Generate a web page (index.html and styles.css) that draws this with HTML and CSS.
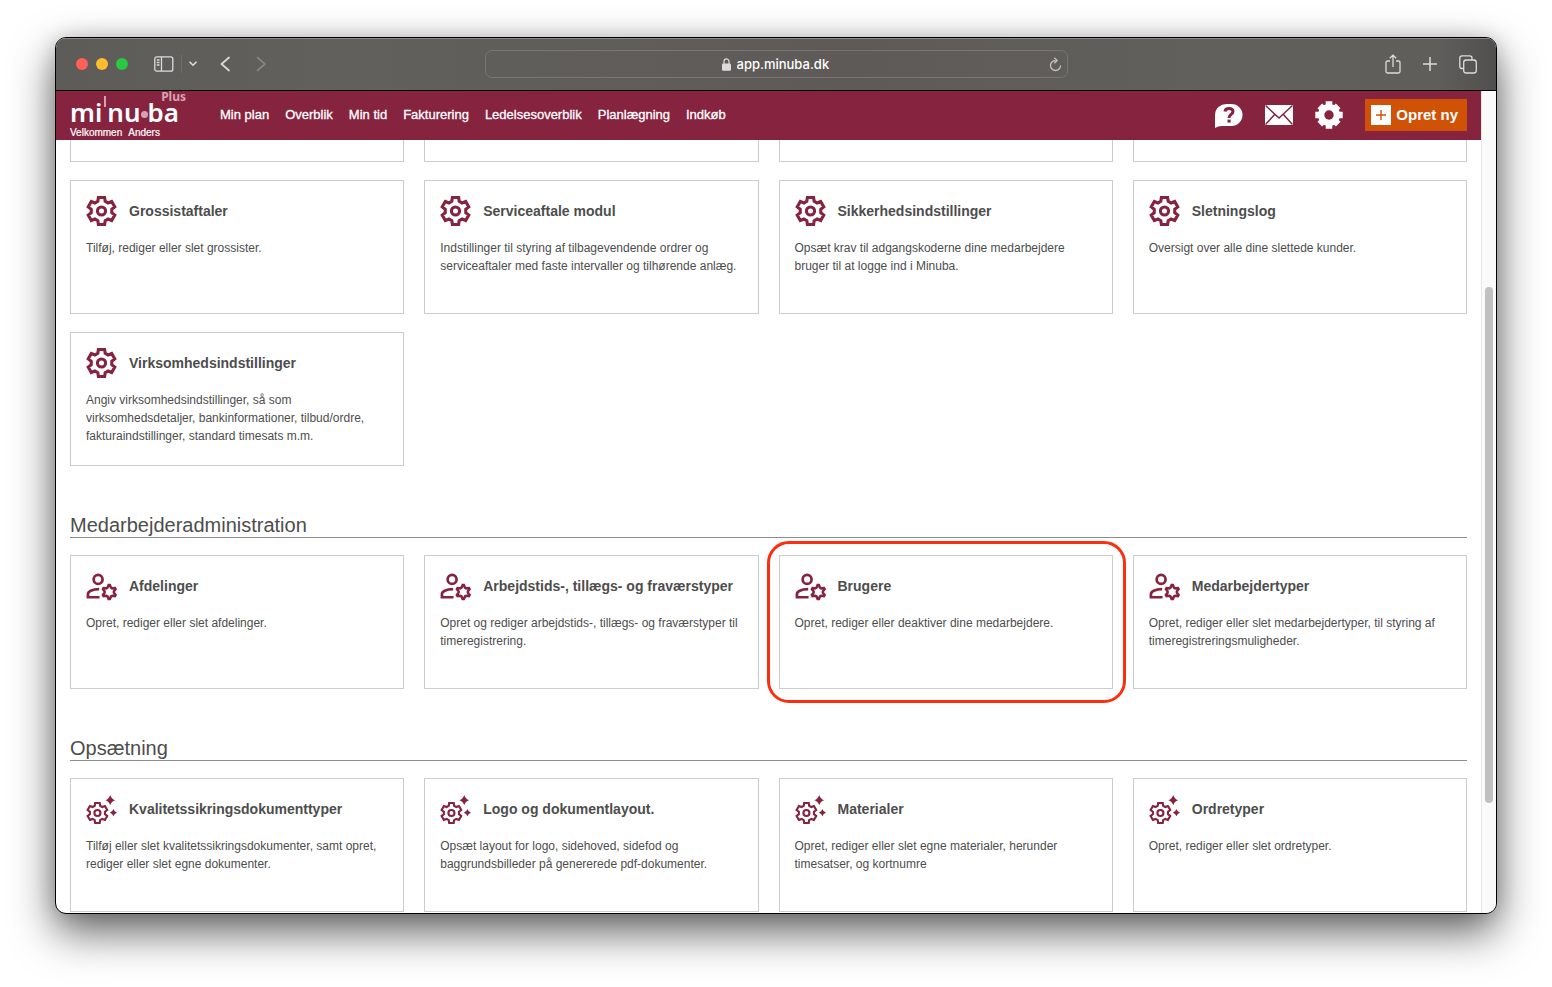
FILE: index.html
```html
<!DOCTYPE html>
<html lang="da">
<head>
<meta charset="utf-8">
<title>Minuba – Indstillinger</title>
<link rel="stylesheet" href="styles.css">
</head>
<body>
<svg class="sprite" aria-hidden="true">
  <symbol id="gear-shape" viewBox="0 0 32 32">
    <path d="M12.8 2H19.2L19.8 6L22.8 7.7L26.5 6.2L29.7 11.8L26.6 14.3V17.7L29.7 20.2L26.5 25.8L22.8 24.3L19.8 26L19.2 30H12.8L12.2 26L9.2 24.3L5.5 25.8L2.3 20.2L5.4 17.7V14.3L2.3 11.8L5.5 6.2L9.2 7.7L12.2 6Z"/>
    <circle cx="16" cy="16" r="4.2"/>
  </symbol>
  <symbol id="gear" viewBox="0 0 32 32">
    <g fill="none" stroke="currentColor" stroke-width="3.2"><use href="#gear-shape" width="32" height="32"/></g>
  </symbol>
  <symbol id="user" viewBox="0 -1 32 32">
    <g fill="none" stroke="currentColor" stroke-width="2.8">
      <circle cx="12.5" cy="8.2" r="4.6"/>
      <path d="M13.6 18.3C6 18.3 2 20.8 2 23.4V26.6H14"/>
      <path transform="translate(24 21.2) scale(.53)" stroke-width="5" d="M-1.2-13.5H1.2L3.4-8.5L5.7-7.2L11.1-7.8L12.3-5.7L9.1-1.3V1.3L12.3 5.7L11.1 7.8L5.7 7.2L3.4 8.5L1.2 13.5H-1.2L-3.4 8.5L-5.7 7.2L-11.1 7.8L-12.3 5.7L-9.1 1.3V-1.3L-12.3-5.7L-11.1-7.8L-5.7-7.2L-3.4-8.5Z"/>
    </g>
  </symbol>
  <symbol id="sparkle" viewBox="0 -2 32 32">
    <g fill="none" stroke="currentColor" stroke-width="3"><use href="#gear-shape" x="0" y="6.300" width="23.600" height="23.600"/></g>
    <path fill="currentColor" d="M25-.4Q26.300 3.800 30 4.900Q26.300 6 25 10.200Q23.700 6 20 4.900Q23.700 3.800 25-.4ZM28.300 14Q29.200 17 32 17.800Q29.200 18.600 28.300 21.600Q27.400 18.600 24.600 17.800Q27.400 17 28.300 14Z"/>
  </symbol>
</svg>

<div class="window">
  <div class="toolbar">
    <div class="tools">
      <span class="dot red"></span><span class="dot yellow"></span><span class="dot green"></span>
      <button class="tool sidebar" aria-label="Sidebar"><svg width="20" height="16" viewBox="0 0 20 16" fill="none" stroke="currentColor" stroke-width="1.3"><rect x=".8" y=".8" width="18" height="14.400" rx="2"/><path d="M7.500 1V15M2.800 4H5.500M2.800 6.500H5.500M2.800 9H5.500"/></svg></button>
      <button class="tool caret" aria-label="Tab groups"><svg width="8" height="6" viewBox="0 0 8 6" fill="none" stroke="currentColor" stroke-width="1.600" stroke-linecap="round"><path d="M1 1.200L4 4.200L7 1.200"/></svg></button>
      <button class="tool back" aria-label="Back"><svg width="11" height="16" viewBox="0 0 11 16" fill="none" stroke="currentColor" stroke-width="1.700" stroke-linecap="round"><path d="M9 1.500L1.500 8L9 14.500"/></svg></button>
      <button class="tool forward" aria-label="Forward" disabled><svg width="11" height="16" viewBox="0 0 11 16" fill="none" stroke="currentColor" stroke-width="1.700" stroke-linecap="round"><path d="M1.500 1.500L9 8L1.500 14.500"/></svg></button>
    </div>
    <div class="address">
      <label class="site">
        <svg width="9" height="13" viewBox="0 0 9 13"><rect y="5.500" width="9" height="7.300" rx="1.200" fill="currentColor"/><path d="M2 6V3.500a2.500 2.700 0 0 1 5 0V6" fill="none" stroke="currentColor" stroke-width="1.200"/></svg>
        <input type="text" value="app.minuba.dk" aria-label="Address">
      </label>
      <button class="tool reload" aria-label="Reload"><svg width="13" height="15" viewBox="0 0 13 15" fill="none" stroke="currentColor" stroke-width="1.300"><path d="M6.500 3.500A5 5 0 1 0 11.500 8.500M5.300 .8L8.200 3.500L5.300 6.300"/></svg></button>
    </div>
    <div class="tools end">
      <button class="tool" aria-label="Share"><svg width="16" height="20" viewBox="0 0 16 20" fill="none" stroke="currentColor" stroke-width="1.300"><path d="M5 7H2.500Q1 7 1 8.500V17.500Q1 19 2.500 19H13.500Q15 19 15 17.500V8.500Q15 7 13.500 7H11M8 13V1.200M4.800 4.300L8 1.100L11.200 4.300"/></svg></button>
      <button class="tool" aria-label="New tab"><svg width="14" height="14" viewBox="0 0 14 14" fill="none" stroke="currentColor" stroke-width="1.500"><path d="M7 0V14M0 7H14"/></svg></button>
      <button class="tool" aria-label="Tabs"><svg width="18" height="19" viewBox="0 0 18 19" fill="none" stroke="currentColor" stroke-width="1.300"><rect x="4.700" y="5" width="12.600" height="13" rx="2.500"/><path d="M4.500 13.500H3Q.8 13.500 .8 11.300V3Q.8 .8 3 .8H10.800Q13 .8 13 3V5"/></svg></button>
    </div>
  </div>

  <div class="viewport">
    <div class="page">
      <header class="header">
        <div class="brand">
          <a class="logo" href="#"><span>mi</span><i class="tick"></i><span>nu</span><i class="bullet"></i><span>ba</span><span class="plus">Plus</span></a>
          <div class="welcome"><span>Velkommen</span><span>Anders</span></div>
        </div>
        <nav class="nav">
          <a href="#">Min plan</a><a href="#">Overblik</a><a href="#">Min tid</a><a href="#">Fakturering</a><a href="#">Ledelsesoverblik</a><a href="#">Planlægning</a><a href="#">Indkøb</a>
        </nav>
        <div class="actions">
          <button class="action" aria-label="Hjælp"><svg width="28" height="28" viewBox="0 0 28 28"><path fill="#fff" d="M12.500 3H16.500A11 11 0 0 1 16.500 25H7Q3 25 0 27V14A11.500 11 0 0 1 12.500 3Z"/><path d="M10 10.500Q10.300 7.500 14 7.500Q18 7.500 18 10.600Q18 12.400 16 13.500Q14 14.800 14 17" fill="none" stroke="#86233f" stroke-width="3"/><rect x="12.500" y="18.600" width="3.100" height="3" fill="#86233f"/></svg></button>
          <button class="action" aria-label="Beskeder"><svg width="28" height="28" viewBox="0 0 28 28"><rect y="4" width="28" height="20" fill="#fff"/><path d="M.5 4.500L14 17L27.500 4.500M.5 23.500L9.800 13.300M27.500 23.500L18.200 13.300" fill="none" stroke="#86233f" stroke-width="1.500"/></svg></button>
          <button class="action" aria-label="Indstillinger"><svg width="28" height="28" viewBox="0 0 28 28"><g fill="#fff"><circle cx="14" cy="14" r="11"/><g stroke="#fff" stroke-width="6.600"><path d="M14 .3V27.700M.3 14H27.700"/></g><g stroke="#fff" stroke-width="6.600"><path d="M4.800 4.800L23.200 23.200M23.200 4.800L4.800 23.200"/></g></g><circle cx="14" cy="14" r="4.700" fill="#86233f"/></svg></button>
          <button class="create"><svg width="20" height="20" viewBox="0 0 20 20"><rect width="20" height="20" fill="#fff"/><path d="M10 5V15M5 10H15" stroke="#cf5207" stroke-width="1.400"/></svg>Opret ny</button>
        </div>
      </header>

      <main class="content">
        <div class="grid">
          <div class="stub"></div><div class="stub"></div><div class="stub"></div><div class="stub"></div>
          <a class="card" href="#"><h3><svg><use href="#gear"/></svg>Grossistaftaler</h3><p>Tilføj, rediger eller slet grossister.</p></a>
          <a class="card" href="#"><h3><svg><use href="#gear"/></svg>Serviceaftale modul</h3><p>Indstillinger til styring af tilbagevendende ordrer og serviceaftaler med faste intervaller og tilhørende anlæg.</p></a>
          <a class="card" href="#"><h3><svg><use href="#gear"/></svg>Sikkerhedsindstillinger</h3><p>Opsæt krav til adgangskoderne dine medarbejdere bruger til at logge ind i Minuba.</p></a>
          <a class="card" href="#"><h3><svg><use href="#gear"/></svg>Sletningslog</h3><p>Oversigt over alle dine slettede kunder.</p></a>
          <a class="card" href="#"><h3><svg><use href="#gear"/></svg>Virksomhedsindstillinger</h3><p>Angiv virksomhedsindstillinger, så som virksomhedsdetaljer, bankinformationer, tilbud/ordre, fakturaindstillinger, standard timesats m.m.</p></a>
        </div>
        <h2>Medarbejderadministration</h2>
        <div class="grid">
          <a class="card" href="#"><h3><svg><use href="#user"/></svg>Afdelinger</h3><p>Opret, rediger eller slet afdelinger.</p></a>
          <a class="card" href="#"><h3><svg><use href="#user"/></svg>Arbejdstids-, tillægs- og fraværstyper</h3><p>Opret og rediger arbejdstids-, tillægs- og fraværstyper til timeregistrering.</p></a>
          <a class="card marked" href="#"><h3><svg><use href="#user"/></svg>Brugere</h3><p>Opret, rediger eller deaktiver dine medarbejdere.</p></a>
          <a class="card" href="#"><h3><svg><use href="#user"/></svg>Medarbejdertyper</h3><p>Opret, rediger eller slet medarbejdertyper, til styring af timeregistreringsmuligheder.</p></a>
        </div>
        <h2>Opsætning</h2>
        <div class="grid">
          <a class="card" href="#"><h3><svg><use href="#sparkle"/></svg>Kvalitetssikringsdokumenttyper</h3><p>Tilføj eller slet kvalitetssikringsdokumenter, samt opret, rediger eller slet egne dokumenter.</p></a>
          <a class="card" href="#"><h3><svg><use href="#sparkle"/></svg>Logo og dokumentlayout.</h3><p>Opsæt layout for logo, sidehoved, sidefod og baggrundsbilleder på genererede pdf-dokumenter.</p></a>
          <a class="card" href="#"><h3><svg><use href="#sparkle"/></svg>Materialer</h3><p>Opret, rediger eller slet egne materialer, herunder timesatser, og kortnumre</p></a>
          <a class="card" href="#"><h3><svg><use href="#sparkle"/></svg>Ordretyper</h3><p>Opret, rediger eller slet ordretyper.</p></a>
        </div>
      </main>
    </div>
    <div class="scrollbar"><div class="thumb"></div></div>
  </div>
</div>
</body>
</html>
```
FILE: styles.css
```css
* { box-sizing: border-box; }
body {
  margin: 0;
  height: 100vh;
  padding: 37px 55px 73px;
  display: flex;
  overflow: hidden;
  background: #fff;
  font-family: "Liberation Sans", Arial, sans-serif;
  color: #4d4d4d;
}
button { padding: 0; border: 0; background: none; color: inherit; font: inherit; }
a { color: inherit; text-decoration: none; }
svg { display: block; flex: none; }
.sprite { position: absolute; width: 0; height: 0; }

.window {
  flex: 1;
  min-width: 0;
  display: flex;
  flex-direction: column;
  overflow: hidden;
  border: 1px solid #000;
  border-radius: 11px;
  background: #fff;
  box-shadow: 0 18px 44px rgba(0, 0, 0, .62), 0 0 20px rgba(0, 0, 0, .14);
}

/* Browser toolbar */
.toolbar {
  flex: none;
  height: 53px;
  display: grid;
  grid-template-columns: 1fr minmax(0, 583px) 1fr;
  align-items: center;
  border-bottom: 1px solid #000;
  background: linear-gradient(90deg, #5d5c59, #61605c 20%, #5e5a58 55%, #61605d 80%, #5f5e5b 96%, #504f4d);
  box-shadow: inset 0 1px #8a8987;
  color: #dcdcdb;
}
.tools { display: flex; align-items: center; padding-left: 20px; }
.tools.end { justify-content: flex-end; gap: 22px; padding: 0 19px 0 0; }
.dot { width: 12px; height: 12px; margin-right: 8px; border-radius: 50%; }
.red { background: #ff5f57; }
.yellow { background: #febc2e; }
.green { background: #28c840; }
.tool { display: flex; align-items: center; justify-content: center; }
.sidebar { margin-left: 18px; padding-right: 7px; }
.caret { height: 18px; padding-left: 7px; border-left: 1px solid #6f6e6b; }
.back { margin-left: 23px; }
.forward { margin-left: 25px; color: #868583; }
.address {
  height: 28px;
  display: grid;
  grid-template-columns: 1fr auto 1fr;
  align-items: center;
  border: 1px solid #777673;
  border-radius: 7px;
}
.site { grid-column: 2; display: flex; align-items: center; gap: 6px; }
.site input {
  width: 94px;
  padding: 0;
  border: 0;
  background: none;
  color: #fff;
  font: 500 13px/16px Inter, sans-serif;
}
.reload { justify-self: end; margin-right: 5px; color: #c2c1bf; }

.viewport { flex: 1; min-height: 0; display: flex; }
.page { flex: 1; min-width: 0; display: flex; flex-direction: column; }
.scrollbar {
  width: 15px;
  display: flex;
  flex-direction: column;
  align-items: center;
  border-left: 1px solid #e8e8e8;
  background: #fafafa;
}
.scrollbar::before { content: ""; flex: 196; }
.scrollbar::after { content: ""; flex: 110; }
.thumb { flex: 516; width: 8px; border-radius: 4px; background: #c1c1c1; }

/* App header */
.header {
  flex: none;
  height: 49px;
  display: flex;
  align-items: center;
  padding: 0 14px 2px;
  background: #86233f;
  color: #fff;
}
.brand { width: 150px; height: 47px; padding-top: 4px; }
.logo {
  position: relative;
  width: 116px;
  height: 32px;
  display: flex;
  font: 600 26px/34px "Noto Sans", sans-serif;
}
.tick { width: 2px; height: 11px; margin: 1px 1px 0 2px; background: #d9a0b4; }
.bullet { width: 7px; height: 7px; margin-top: 16px; border-radius: 50%; background: #d9a0b4; }
.plus {
  position: absolute;
  top: -5px;
  right: 0;
  color: #d9a0b4;
  font-size: 12px;
  font-weight: 700;
  line-height: 14px;
}
.welcome { display: flex; gap: 6px; font-size: 10px; line-height: 12px; -webkit-text-stroke: .2px; }
.nav { display: flex; gap: 16px; font-size: 13px; line-height: 16px; -webkit-text-stroke: .3px; white-space: nowrap; }
.actions { display: flex; align-items: center; gap: 22px; margin-left: auto; }
.create {
  height: 32px;
  display: flex;
  align-items: center;
  gap: 5px;
  padding: 0 9px 0 6px;
  background: #cf5207;
  font-size: 15px;
  font-weight: 700;
}

/* Settings overview */
.content { flex: 1; min-height: 0; overflow: hidden; padding: 0 14px; }
.grid { display: grid; grid-template-columns: repeat(4, minmax(0, 1fr)); gap: 18px 20px; }
.stub { height: 22px; border: 1px solid #ccc; border-top: 0; }
.card {
  position: relative;
  min-height: 134px;
  padding: 14px 15px;
  border: 1px solid #ccc;
}
.card h3 {
  display: flex;
  align-items: center;
  gap: 12px;
  margin: 0 0 12px;
  font-size: 14px;
  line-height: 20px;
}
.card h3 svg { width: 31px; height: 32px; color: #86233f; }
.card p { margin: 0; font-size: 12px; line-height: 18px; }
.marked::after {
  content: "";
  position: absolute;
  inset: -15px -14px -15px -13px;
  border: 3px solid #fb2f10;
  border-radius: 22px;
}
h2 {
  margin: 47px 0 17px;
  border-bottom: 1px solid #8c8c8c;
  font-size: 20px;
  font-weight: 400;
  line-height: 24px;
}
```
